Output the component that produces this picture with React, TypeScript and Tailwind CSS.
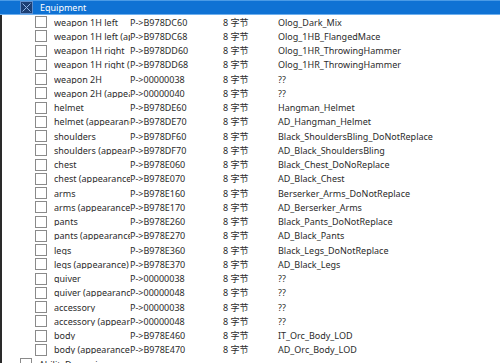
import React from 'react';

const rows: [string, string, string][] = [
  ['weapon 1H left', 'P->B978DC60', 'Olog_Dark_Mix'],
  ['weapon 1H left (appearance)', 'P->B978DC68', 'Olog_1HB_FlangedMace'],
  ['weapon 1H right', 'P->B978DD60', 'Olog_1HR_ThrowingHammer'],
  ['weapon 1H right (appearance)', 'P->B978DD68', 'Olog_1HR_ThrowingHammer'],
  ['weapon 2H', 'P->00000038', '??'],
  ['weapon 2H (appearance)', 'P->00000040', '??'],
  ['helmet', 'P->B978DE60', 'Hangman_Helmet'],
  ['helmet (appearance)', 'P->B978DE70', 'AD_Hangman_Helmet'],
  ['shoulders', 'P->B978DF60', 'Black_ShouldersBling_DoNotReplace'],
  ['shoulders (appearance)', 'P->B978DF70', 'AD_Black_ShouldersBling'],
  ['chest', 'P->B978E060', 'Black_Chest_DoNoReplace'],
  ['chest (appearance)', 'P->B978E070', 'AD_Black_Chest'],
  ['arms', 'P->B978E160', 'Berserker_Arms_DoNotReplace'],
  ['arms (appearance)', 'P->B978E170', 'AD_Berserker_Arms'],
  ['pants', 'P->B978E260', 'Black_Pants_DoNotReplace'],
  ['pants (appearance)', 'P->B978E270', 'AD_Black_Pants'],
  ['legs', 'P->B978E360', 'Black_Legs_DoNotReplace'],
  ['legs (appearance)', 'P->B978E370', 'AD_Black_Legs'],
  ['quiver', 'P->00000038', '??'],
  ['quiver (appearance)', 'P->00000048', '??'],
  ['accessory', 'P->00000038', '??'],
  ['accessory (appearance)', 'P->00000048', '??'],
  ['body', 'P->B978E460', 'IT_Orc_Body_LOD'],
  ['body (appearance)', 'P->B978E470', 'AD_Orc_Body_LOD'],
];

function Check() {
  return <div className="w-[12px] h-[12px] border border-[#8a8a8a] bg-white shrink-0" />;
}

export default function App() {
  return (
    <div className="w-[500px] h-[363px] overflow-hidden bg-white text-[#2b2b2b] text-[9px] leading-none" style={{ fontFamily: '"Noto Sans", "Noto Sans CJK SC", sans-serif' }}>
      <div className="h-[15px] flex items-center bg-[#0f72d4] border-t border-[#4a9be6] border-b border-b-[#6fb0ee]">
        <div className="ml-[20px] w-[13px] h-[13px] bg-[#1c3f74] border border-[#5e8fcf] flex items-center justify-center">
          <svg width="9" height="9" viewBox="0 0 9 9">
            <path d="M0.5 0.5L8.5 8.5M8.5 0.5L0.5 8.5" stroke="#8fb4e6" strokeWidth="1" />
          </svg>
        </div>
        <span className="ml-[7px] text-white">Equipment</span>
      </div>
      <div className="border-l-2 border-[#2a2a2a] h-[348px] overflow-hidden">
        {rows.map(([name, addr, val], i) => (
          <div key={i} className="h-[14.25px] flex items-center">
            <div className="w-[33px]" />
            <Check />
            <div className="ml-[7px] w-[76px] overflow-hidden whitespace-nowrap">{name}</div>
            <div className="w-[93px] whitespace-nowrap">{addr}</div>
            <div className="w-[55px] whitespace-nowrap">8 字节</div>
            <div className="whitespace-nowrap">{val}</div>
          </div>
        ))}
        <div className="h-[14.25px] flex items-center">
          <div className="w-[18px]" />
          <Check />
          <div className="ml-[7px] whitespace-nowrap">AbilityDynamic</div>
        </div>
      </div>
    </div>
  );
}
